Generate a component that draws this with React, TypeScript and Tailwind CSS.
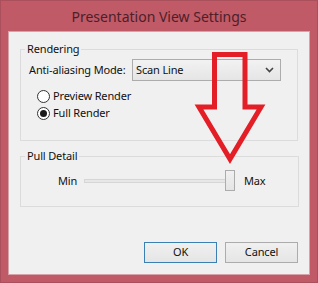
import React from 'react';

const font = { fontFamily: '"Noto Sans", "Open Sans", sans-serif' };

function Radio({ label, checked }: { label: string; checked?: boolean }) {
  return (
    <label className="flex items-center h-[17px] gap-[3px] whitespace-nowrap">
      <span className="w-[13px] h-[13px] rounded-full border border-[#333] bg-white flex items-center justify-center">
        {checked && <span className="w-[7px] h-[7px] rounded-full bg-[#1a1a1a]" />}
      </span>
      <span>{label}</span>
    </label>
  );
}

function Button({ label, primary }: { label: string; primary?: boolean }) {
  return (
    <button
      className={`w-[73px] h-[21px] border bg-gradient-to-b from-[#f0f0f0] to-[#e5e5e5] text-[11px] text-[#111] ${
        primary ? 'border-[#3c7fb1]' : 'border-[#acacac]'
      }`}
    >
      {label}
    </button>
  );
}

export default function App() {
  return (
    <div
      className="relative w-[318px] h-[283px] bg-[#c05a67] border border-[#a9505c] flex flex-col px-[7px] pb-[7px] text-[11px] tracking-[-0.15px] text-[#111]"
      style={font}
    >
      {/* title bar */}
      <div className="h-[30px] flex items-center justify-center text-[14px] tracking-normal text-[#4d2029] pt-[1px]">
        Presentation View Settings
      </div>

      {/* client area */}
      <div className="flex-1 bg-[#f0f0f0] border border-[#d7a3aa] flex flex-col px-[11px] pt-[10px] pb-[11px]">
        <fieldset className="border border-[#dcdcdc] h-[99px] px-[8px]">
          <legend className="ml-[-4px] px-[2px] leading-[14px]">Rendering</legend>
          <div className="flex items-center mt-[3px] whitespace-nowrap">
            <span className="w-[103px] shrink-0">Anti-aliasing Mode:</span>
            <div className="shrink-0 w-[149px] h-[22px] border border-[#acacac] bg-gradient-to-b from-[#f2f2f2] to-[#e5e5e5] flex items-center justify-between pl-[3px] pr-[6px]">
              <span>Scan Line</span>
              <svg width="9" height="6" viewBox="0 0 9 6">
                <path d="M1 1 L4.5 4.5 L8 1" fill="none" stroke="#444" strokeWidth="1.6" />
              </svg>
            </div>
          </div>
          <div className="flex flex-col pl-[8px] mt-[7px]">
            <Radio label="Preview Render" />
            <Radio label="Full Render" checked />
          </div>
        </fieldset>

        <fieldset className="border border-[#dcdcdc] h-[58px] mt-[8px] mr-[-1px] px-[8px]">
          <legend className="ml-[-4px] px-[2px] leading-[14px]">Pull Detail</legend>
          <div className="flex items-center h-[30px] mt-[3px] pl-[29px]">
            <span className="w-[26px]">Min</span>
            <div className="relative w-[146px] h-[4px] border border-[#d6d6d6] bg-[#e7e7e7]">
              <div className="absolute left-[140px] top-[-10px] w-[10px] h-[21px] border border-[#acacac] bg-gradient-to-b from-[#f0f0f0] to-[#e5e5e5]" />
            </div>
            <span className="ml-[14px]">Max</span>
          </div>
        </fieldset>

        <div className="mt-auto flex justify-end gap-[8px]">
          <Button label="OK" primary />
          <Button label="Cancel" />
        </div>
      </div>

      {/* red annotation arrow */}
      <svg className="absolute left-[-1px] top-[-1px] pointer-events-none" width="318" height="283" viewBox="0 0 318 283">
        <path
          d="M214.5 54.5 L245 54.5 L245 107 L261 107 L230 159 L199 107 L214.5 107 Z"
          fill="none"
          stroke="#e41e26"
          strokeWidth="5"
          strokeLinejoin="miter"
        />
      </svg>
    </div>
  );
}
